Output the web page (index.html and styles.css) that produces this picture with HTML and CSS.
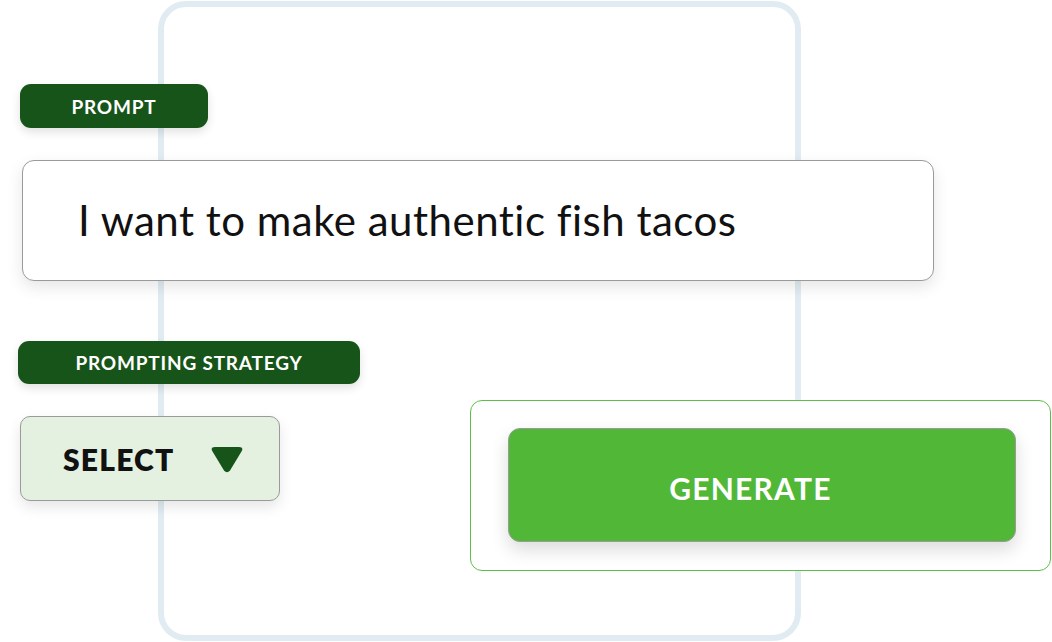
FILE: index.html
```html
<!DOCTYPE html>
<html>
<head>
<meta charset="utf-8">
<link rel="stylesheet" href="styles.css">
</head>
<body>
<div class="stage">
  <div class="backdrop"></div>
  <div class="content">
    <div class="pill pill-prompt">PROMPT</div>
    <div class="prompt-box">I want to make authentic fish tacos</div>
    <div class="pill pill-strategy">PROMPTING STRATEGY</div>
    <div class="row">
      <div class="select">
        <span class="select-label">SELECT</span>
        <svg class="caret" width="34" height="26" viewBox="0 0 34 26">
          <path d="M5 0 H29 Q34 0 31.5 4.5 L20 23.5 Q17 27 14 23.5 L2.5 4.5 Q0 0 5 0 Z" fill="#17541a"/>
        </svg>
      </div>
      <div class="generate-frame">
        <div class="generate-btn">GENERATE</div>
      </div>
    </div>
  </div>
</div>
</body>
</html>
```
FILE: styles.css
```css
html, body {
  margin: 0;
  padding: 0;
  background: #ffffff;
}
.stage {
  position: relative;
  width: 1052px;
  height: 642px;
  overflow: hidden;
  font-family: "Lato", "Liberation Sans", sans-serif;
}
.backdrop {
  position: absolute;
  left: 158px;
  top: 1px;
  width: 643px;
  height: 640px;
  box-sizing: border-box;
  border: 6px solid #e0ecf2;
  border-radius: 28px;
}
.content {
  position: relative;
  display: flex;
  flex-direction: column;
  align-items: flex-start;
  padding-top: 84px;
}
.pill {
  background: #17541a;
  color: #ffffff;
  font-weight: 700;
  border-radius: 11px;
  display: flex;
  align-items: center;
  justify-content: center;
  box-shadow: 0 4px 10px rgba(0,0,0,0.12);
  font-size: 19px;
  letter-spacing: 0.8px;
}
.pill-prompt {
  margin-left: 20px;
  width: 188px;
  height: 44px;
}
.pill-strategy {
  margin-left: 18px;
  margin-top: 60px;
  width: 342px;
  height: 43px;
}
.prompt-box {
  margin-left: 22px;
  margin-top: 32px;
  width: 912px;
  height: 121px;
  box-sizing: border-box;
  border: 1.5px solid #9a9a9a;
  border-radius: 12px;
  background: #ffffff;
  box-shadow: 0 6px 16px rgba(0,0,0,0.10);
  display: flex;
  align-items: center;
  padding-left: 55px;
  font-size: 42px;
  letter-spacing: 0.5px;
  color: #111111;
  padding-bottom: 2px;
}
.row {
  display: flex;
  align-items: flex-start;
  margin-top: 16px;
}
.select {
  margin-left: 20px;
  margin-top: 16px;
  width: 260px;
  height: 85px;
  box-sizing: border-box;
  background: #e4f1e1;
  border: 1.5px solid #9a9a9a;
  border-radius: 10px;
  box-shadow: 0 6px 14px rgba(0,0,0,0.10);
  display: flex;
  align-items: center;
  padding-left: 42px;
}
.select-label {
  font-size: 30px;
  font-weight: 800;
  color: #111111;
  letter-spacing: 1.2px;
}
.caret {
  margin-left: 36px;
  margin-top: 2px;
}
.generate-frame {
  margin-left: 190px;
  width: 581px;
  height: 171px;
  box-sizing: border-box;
  border: 1.5px solid #5cbf47;
  border-radius: 12px;
  padding: 26.5px 0 0 36.5px;
  background: #ffffff;
}
.generate-btn {
  width: 508px;
  height: 114px;
  box-sizing: border-box;
  background: #50b836;
  border: 1.5px solid #9a9a9a;
  border-radius: 12px;
  box-shadow: 0 8px 18px rgba(0,0,0,0.14);
  color: #ffffff;
  font-size: 30px;
  font-weight: 700;
  letter-spacing: 1.2px;
  display: flex;
  align-items: center;
  justify-content: center;
  padding: 6px 22px 0 0;
}
```
